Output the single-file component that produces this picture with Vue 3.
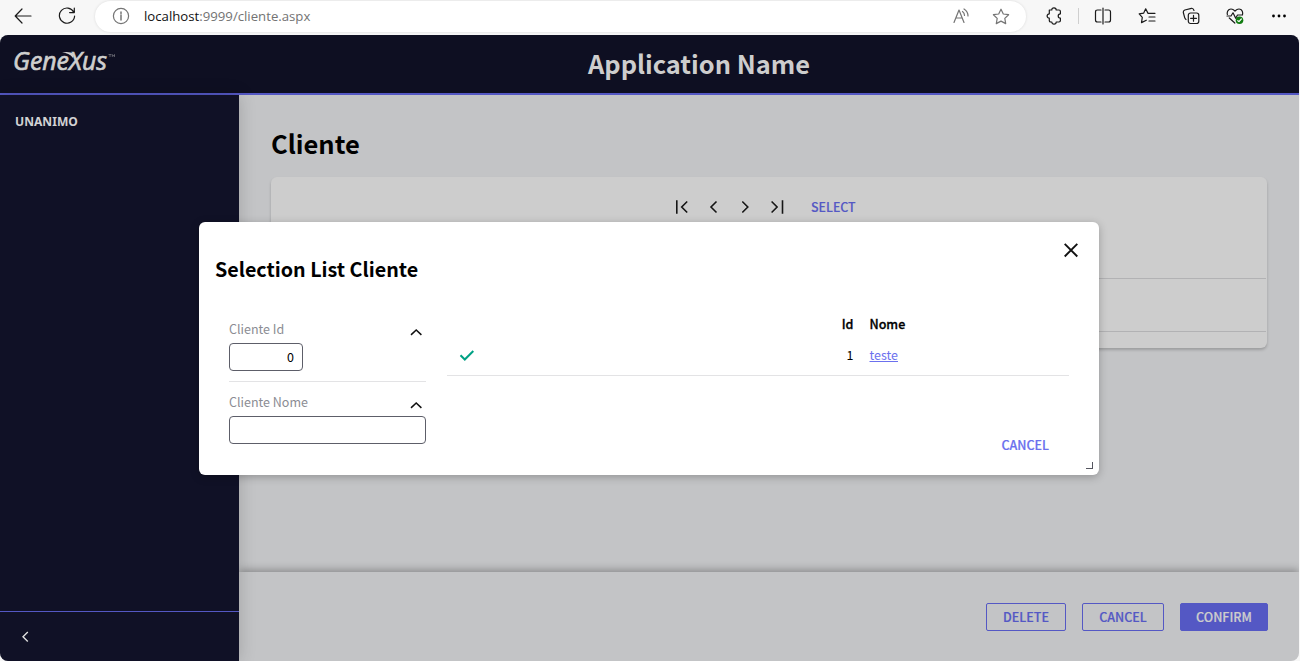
<script setup>
const nav = [
  { name: 'first', d: 'M2.8 1.3V14.7M13.2 2.5L7.7 8L13.2 13.5' },
  { name: 'previous', d: 'M10.5 2.5L5 8L10.5 13.5' },
  { name: 'next', d: 'M4.3 2.5L9.8 8L4.3 13.5' },
  { name: 'last', d: 'M12.5 1.3V14.7M1.6 2.5L7.1 8L1.6 13.5' },
]
</script>

<template>
  <div class="window">
    <div class="toolbar">
      <svg class="ico back" width="18" height="16" viewBox="0 0 18 16"><path d="M1.5 8H17M8 1L1.2 8L8 15" /></svg>
      <svg class="ico reload" width="18" height="18" viewBox="0 0 18 18"><path d="M15.8 5.2A7.6 7.6 0 1 0 16.6 9M16.3 1V5.6H11.6" /></svg>
      <div class="address">
        <svg class="ico grey" width="18" height="18" viewBox="0 0 18 18"><circle cx="9" cy="9" r="7.6" /><path d="M9 8V13M9 5V6.5" stroke-width="1.5" /></svg>
        <span class="url"><b>localhost</b>:9999/cliente.aspx</span>
        <svg class="ico grey read" width="18" height="16" viewBox="0 0 18 16"><path d="M1 14.5L6 2L11 14.5M2.8 10H9.2M9.5 3.5Q11.5 5 11.5 7.5M11 1Q15 3.5 15 8" /></svg>
        <svg class="ico grey" width="18" height="17" viewBox="0 0 18 17"><path d="M9 1.2L11.3 6L16.6 6.7L12.8 10.4L13.7 15.6L9 13.1L4.3 15.6L5.2 10.4L1.4 6.7L6.7 6Z" /></svg>
      </div>
      <div class="tools">
        <svg class="ico" width="18" height="18" viewBox="0 0 18 18"><path d="M4.3 3H6.8A2.2 2.2 0 0 1 11.2 3H14Q15.4 3 15.4 4.4V6.8A2.2 2.2 0 0 0 15.4 11.2V13.6Q15.4 15 14 15H11.2A2.2 2.2 0 0 1 6.8 15H5.7Q4.3 15 4.3 13.6V11.2A2.2 2.2 0 0 1 4.3 6.8Z" /></svg>
        <i class="sep"></i>
        <svg class="ico" width="18" height="18" viewBox="0 0 18 18"><path d="M7 3H3.5Q1.5 3 1.5 5V13Q1.5 15 3.5 15H7M11 3H14.5Q16.5 3 16.5 5V13Q16.5 15 14.5 15H11M9 1V17" /></svg>
        <svg class="ico" width="18" height="18" viewBox="0 0 18 18"><path d="M10 6.2L7.7 1.8L5.6 6.2L1.2 6.9L4.3 10.4L3.5 15.6L8.3 13.2M7.7 1.8L9.9 6.3H17M11 10H17M11 14H17" /></svg>
        <svg class="ico" width="18" height="18" viewBox="0 0 18 18"><rect x="6.3" y="6" width="10.5" height="10.5" rx="2.2" /><path d="M11.5 8.3V14.2M8.6 11.3H14.5M4 12.5Q3 12 2.7 10.7L1.3 5.5Q1 3.7 2.8 3L9.5 1.3Q11.2 1 12 3.5" /></svg>
        <svg class="ico" width="18" height="18" viewBox="0 0 18 18"><path d="M1.4 7.5Q.6 4.5 2.8 2.7Q5.7.8 9 4Q12.2.8 15.2 2.7Q17.2 4.5 16.5 7.5M1 9H5L7 5.8L9.7 11.3L11.5 8H16.5M3.3 11L8.8 16" /><circle cx="13.5" cy="13.2" r="3.8" fill="#107c10" stroke="none" /><path d="M11.8 13.7L13 14.6L15.3 12" stroke="#fff" /></svg>
        <svg width="18" height="18" viewBox="0 0 18 18"><circle cx="3.5" cy="9" r="1.4" /><circle cx="9" cy="9" r="1.4" /><circle cx="14.5" cy="9" r="1.4" /></svg>
      </div>
    </div>

    <div class="page">
      <header class="header">
        <svg class="logo" width="104" height="44" viewBox="0 0 104 44">
          <text class="logotext" x="0" y="28.3" textLength="94" lengthAdjust="spacingAndGlyphs">GeneXus</text>
          <path d="M49 10.6Q56 9 61 12L60 16Q56 10.8 49 10.6Z" fill="#cfcfcf" />
          <path class="tm" d="M95.5 12.5H98.5M97 12.5V15M99.3 15V12.5L100.4 14.2L101.5 12.5V15" />
        </svg>
        <h1 class="appname">Application Name</h1>
      </header>

      <div class="body">
        <aside class="side">
          <div class="menu">UNANIMO</div>
          <div class="collapse">
            <svg width="8" height="12" viewBox="0 0 8 12"><path d="M6.8 1L2 5.8L6.8 10.6" /></svg>
          </div>
        </aside>
        <main class="main">
          <div class="content">
            <h2 class="title">Cliente</h2>
            <section class="card">
              <div class="nav">
                <svg v-for="n in nav" :key="n.name" width="16" height="16" viewBox="0 0 16 16"><path :d="n.d" /></svg>
                <span class="select">SELECT</span>
              </div>
              <div class="row"></div>
            </section>
          </div>
          <footer class="actions">
            <button class="btn delete">DELETE</button>
            <button class="btn cancel">CANCEL</button>
            <button class="btn confirm">CONFIRM</button>
          </footer>
        </main>
      </div>
    </div>

    <div class="dialog">
      <div class="dialog-head">
        <h3>Selection List Cliente</h3>
        <svg class="close" width="16" height="16" viewBox="0 0 16 16"><path d="M1.7 1.9L14.3 14.5M14.3 1.9L1.7 14.5" /></svg>
      </div>
      <div class="dialog-body">
        <div class="filters">
          <div class="filter first">
            <div class="label"><span>Cliente Id</span><svg width="12" height="8" viewBox="0 0 12 8"><path d="M1 6.9L6.2 2L11.4 6.9" /></svg></div>
            <div class="input small">0</div>
          </div>
          <div class="filter">
            <div class="label"><span>Cliente Nome</span><svg width="12" height="8" viewBox="0 0 12 8"><path d="M1 6.9L6.2 2L11.4 6.9" /></svg></div>
            <div class="input"></div>
          </div>
        </div>
        <div class="results">
          <div class="grid head"><span></span><span class="num">Id</span><span>Nome</span></div>
          <div class="grid data">
            <span class="check"><svg width="16" height="12" viewBox="0 0 16 12"><path d="M1.5 6.2L5.8 10.5L14.3 2" /></svg></span>
            <span class="num">1</span>
            <a>teste</a>
          </div>
          <div class="dialog-cancel">CANCEL</div>
        </div>
      </div>
      <i class="grip"></i>
    </div>
  </div>
</template>

<style>
body { margin: 0; overflow: hidden; background: #f7f7f7; }
</style>

<style scoped>
* { box-sizing: border-box; }
.window { position: relative; width: 1300px; height: 661px; overflow: hidden; background: #f7f7f7; font-family: "Noto Sans CJK SC", "Noto Sans", sans-serif; font-size: 12.5px; color: #000; }
svg { display: block; flex: none; }
h1, h2, h3 { margin: 0; }

.toolbar { display: flex; align-items: center; height: 35px; padding-bottom: 3px; }
.ico { fill: none; stroke: #1b1b1b; stroke-width: 1.2; stroke-linejoin: round; stroke-linecap: round; }
.ico.grey { stroke: #757575; }
.back { margin-left: 14px; }
.reload { margin-left: 26px; }
.address { display: flex; flex: none; align-items: center; width: 931px; height: 31px; margin-left: 19px; padding: 0 16px 0 17px; border-radius: 16px; background: #fff; box-shadow: 0 0 3px rgba(0, 0, 0, .12); }
.url { margin-left: 14px; font: 13.2px/20px "Open Sans", sans-serif; color: #737373; white-space: nowrap; }
.url b { font-weight: 400; color: #111; }
.read { margin-left: auto; margin-right: 21px; }
.tools { display: flex; flex: none; align-items: center; margin-left: 19px; }
.tools svg { margin-right: 26px; }
.tools svg:first-child { margin-right: 15px; }
.tools svg:last-child { margin-right: 0; }
.sep { width: 1px; height: 16px; margin-right: 15px; background: #cfcfcf; }

.page { display: flex; flex-direction: column; width: 1299px; height: 626px; border-radius: 8px; overflow: hidden; background: #c3c4c6; }
.header { display: flex; align-items: center; height: 60px; flex: none; border-bottom: 2px solid #5458c4; background: #0e0f22; }
.logo { margin: 0 0 0 13px; }
.logotext { font: italic 25px/30px "Open Sans", sans-serif; fill: #cfcfcf; stroke: #cfcfcf; stroke-width: .7; }
.tm { fill: none; stroke: #8a8a90; stroke-width: .6; }
.appname { flex: 1; padding: 0 18px 2px 0; text-align: center; font-size: 25.4px; line-height: 34px; color: #cdcdcd; }
.body { display: flex; flex: 1; min-height: 0; }
.side { position: relative; display: flex; flex-direction: column; justify-content: space-between; width: 239px; background: #101126; z-index: 1; box-shadow: 0 0 16px rgba(0, 0, 0, .18); }
.menu { padding: 17px 15px; font: 700 12.1px/20px "Noto Sans", sans-serif; color: #d2d2d4; }
.collapse { height: 50px; padding: 19px 0 0 21px; border-top: 1px solid #5458c4; }
.collapse path { fill: none; stroke: #ddd; stroke-width: 1.4; }
.main { display: flex; flex: 1; flex-direction: column; }
.content { flex: 1; padding: 30px 32px 0; }
.title { font-size: 25.5px; line-height: 36px; }
.card { height: 171px; margin-top: 16px; border-radius: 6px; background: #cdcdcd; box-shadow: 0 2px 3px rgba(0, 0, 0, .2); }
.nav { display: flex; align-items: center; height: 102px; padding: 0 0 42px 403px; gap: 16px; border-bottom: 1px solid #b2b2b4; margin-right: 1px; }
.nav path { fill: none; stroke: #151515; stroke-width: 1.6; }
.select { margin-left: 9px; font-weight: 500; font-size: 12.4px; -webkit-text-stroke: .15px #5458c4; color: #5458c4; }
.row { height: 53px; margin-right: 1px; border-bottom: 1px solid #b2b2b4; }
.actions { display: flex; align-items: flex-start; justify-content: flex-end; gap: 16px; height: 89px; padding: 31px 31px 0 0; box-shadow: 0 -2px 8px rgba(0, 0, 0, .3); }
.btn { height: 28px; padding: 0; border: 1px solid #5458c4; border-radius: 2px; background: transparent; font: 500 12.5px/24px "Noto Sans CJK SC", sans-serif; -webkit-text-stroke: .2px currentColor; color: #5458c4; }
.delete { width: 80px; }
.cancel { width: 82px; }
.confirm { width: 88px; background: #5458c4; color: #cdcdcd; }

.dialog { position: absolute; z-index: 2; left: 199px; top: 222px; width: 900px; height: 253px; border-radius: 6px; background: #fff; box-shadow: 0 2px 8px rgba(0, 0, 0, .25); }
.dialog-head { display: flex; justify-content: space-between; padding: 20px 20px 0 16px; height: 92px; }
.dialog-head h3 { margin-top: 12px; font-size: 19.7px; line-height: 30px; }
.close path { fill: none; stroke: #111; stroke-width: 1.9; }
.dialog-body { display: flex; gap: 21px; padding-left: 30px; }
.filters { width: 197px; }
.filter { height: 73px; padding-top: 5px; }
.filter.first { border-bottom: 1px solid #e3e3e5; height: 68px; margin-bottom: 5px; }
.label { display: flex; justify-content: space-between; align-items: center; height: 18px; padding-right: 4px; color: #8b8c93; }
.label svg { margin-top: 7px; }
.label path { fill: none; stroke: #111; stroke-width: 1.5; }
.input { height: 28px; margin-top: 6px; padding-right: 8px; border: 1px solid #5d5e69; border-radius: 4px; text-align: right; line-height: 26px; color: #000; }
.small { width: 74px; }
.results { width: 622px; }
.grid { display: grid; grid-template-columns: 1fr 20px 199.5px; column-gap: 16px; align-items: center; }
.head { height: 22px; padding-bottom: 4px; font-weight: 500; -webkit-text-stroke: .3px #000; }
.data { height: 40px; padding-bottom: 2px; border-bottom: 1px solid #e3e3e5; }
.num { text-align: right; }
.check { padding-left: 12px; }
.check path { fill: none; stroke: #00a184; stroke-width: 2; }
a { color: #6b70ee; text-decoration: underline; text-underline-offset: 1px; }
.dialog-cancel { margin-top: 60px; padding-right: 20px; text-align: right; line-height: 18px; font-weight: 500; -webkit-text-stroke: .2px currentColor; color: #6b70ee; }
.grip { position: absolute; right: 6px; bottom: 6px; width: 7px; height: 7px; border-right: 1px solid #555660; border-bottom: 1px solid #555660; }
</style>
